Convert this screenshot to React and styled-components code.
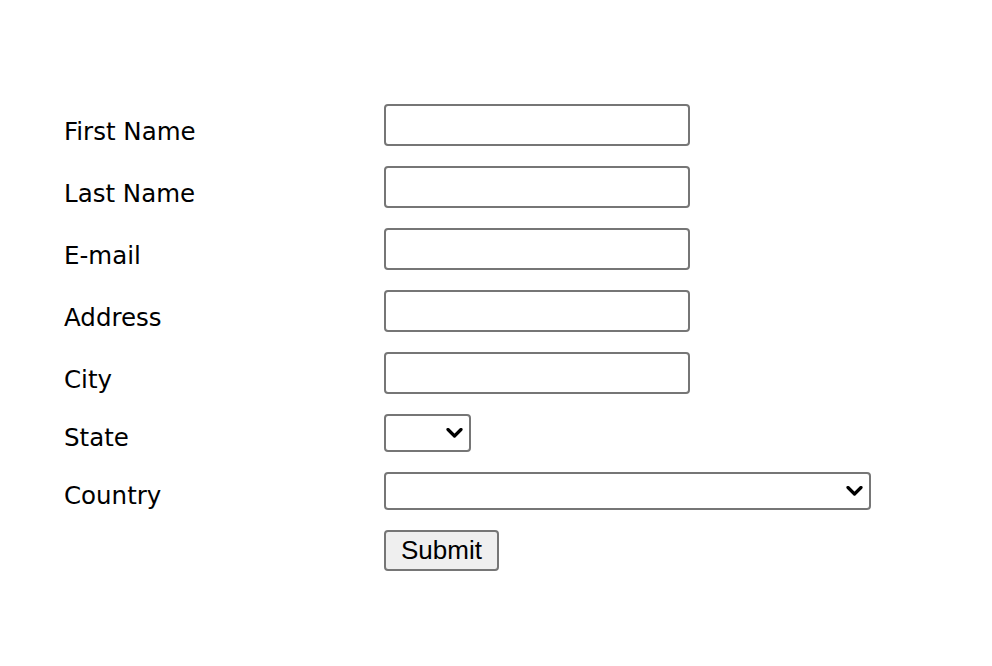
import React from 'react'
import styled, { createGlobalStyle } from 'styled-components'

const GlobalStyle = createGlobalStyle`
  html, body {
    margin: 0;
    padding: 0;
    background: #ffffff;
  }
`

const Page = styled.div`
  padding: 104px 0 0 64px;
`

const Form = styled.form`
  display: grid;
  grid-template-columns: 320px auto;
  row-gap: 20px;
  align-items: center;
  justify-items: start;
`

const Label = styled.label`
  font-family: 'DejaVu Sans', Verdana, sans-serif;
  font-size: 24.5px;
  line-height: 28px;
  color: #000;
  padding-top: ${p => (p.$tall ? 14 : 10)}px;
`

const Input = styled.input`
  box-sizing: border-box;
  width: 306px;
  height: 42px;
  border: 2px solid #767676;
  border-radius: 4px;
  background: #fff;
  padding: 0 6px;
  font-family: 'Liberation Sans', Arial, sans-serif;
  font-size: 26px;
  outline: none;
`

const SelectWrap = styled.div`
  position: relative;
  width: ${p => p.$width}px;
  height: 38px;
`

const Select = styled.select`
  appearance: none;
  -webkit-appearance: none;
  box-sizing: border-box;
  width: 100%;
  height: 100%;
  border: 2px solid #767676;
  border-radius: 4px;
  background: #fff;
  font-family: 'Liberation Sans', Arial, sans-serif;
  font-size: 26px;
  outline: none;
`

const Chevron = styled.svg`
  position: absolute;
  right: 8px;
  top: 14px;
  width: 17px;
  height: 10px;
  pointer-events: none;
`

const Button = styled.button`
  box-sizing: border-box;
  width: 115px;
  height: 41px;
  border: 2px solid #767676;
  border-radius: 4px;
  background: #efefef;
  font-family: 'Liberation Sans', Arial, sans-serif;
  font-size: 26px;
  color: #000;
  padding: 0;
`

const Spacer = styled.div``

const textFields = ['First Name', 'Last Name', 'E-mail', 'Address', 'City']

const DropDown = ({ width }) => (
  <SelectWrap $width={width}>
    <Select>
      <option></option>
    </Select>
    <Chevron viewBox="0 0 17 10">
      <path d="M2 1.5 L8.5 8 L15 1.5" fill="none" stroke="#000" strokeWidth="3.2" strokeLinecap="round" strokeLinejoin="round" />
    </Chevron>
  </SelectWrap>
)

const App = () => {
  return (
    <Page>
      <GlobalStyle />
      <Form onSubmit={e => e.preventDefault()}>
        {textFields.map(name => (
          <React.Fragment key={name}>
            <Label $tall>{name}</Label>
            <Input type="text" />
          </React.Fragment>
        ))}
        <Label>State</Label>
        <DropDown width={87} />
        <Label>Country</Label>
        <DropDown width={487} />
        <Spacer />
        <Button type="submit">Submit</Button>
      </Form>
    </Page>
  )
}

export default App
